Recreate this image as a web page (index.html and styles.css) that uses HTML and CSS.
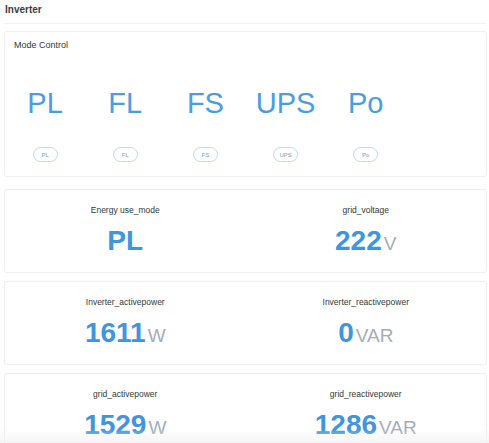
FILE: index.html
```html
<!DOCTYPE html>
<html>
<head>
<meta charset="utf-8">
<link rel="stylesheet" href="styles.css">
</head>
<body>
<div class="page">
  <div class="header">Inverter</div>

  <div class="card mode-card">
    <div class="mode-title">Mode Control</div>
    <div class="mode-grid">
      <div class="mode-big">PL</div>
      <div class="mode-big">FL</div>
      <div class="mode-big">FS</div>
      <div class="mode-big">UPS</div>
      <div class="mode-big">Po</div>
      <div class="mode-empty"></div>
    </div>
    <div class="mode-grid pills">
      <div class="cell"><span class="pill">PL</span></div>
      <div class="cell"><span class="pill">FL</span></div>
      <div class="cell"><span class="pill">FS</span></div>
      <div class="cell"><span class="pill">UPS</span></div>
      <div class="cell"><span class="pill">Po</span></div>
      <div class="cell"></div>
    </div>
  </div>

  <div class="card stat-card first">
    <div class="stat">
      <div class="label">Energy use_mode</div>
      <div class="value">PL</div>
    </div>
    <div class="stat">
      <div class="label">grid_voltage</div>
      <div class="value">222<span class="unit">V</span></div>
    </div>
  </div>

  <div class="card stat-card">
    <div class="stat">
      <div class="label">Inverter_activepower</div>
      <div class="value">1611<span class="unit">W</span></div>
    </div>
    <div class="stat">
      <div class="label">Inverter_reactivepower</div>
      <div class="value">0<span class="unit">VAR</span></div>
    </div>
  </div>

  <div class="card stat-card">
    <div class="stat">
      <div class="label">grid_activepower</div>
      <div class="value">1529<span class="unit">W</span></div>
    </div>
    <div class="stat">
      <div class="label">grid_reactivepower</div>
      <div class="value">1286<span class="unit">VAR</span></div>
    </div>
  </div>
</div>
<div class="fade"></div>
</body>
</html>
```

FILE: styles.css
```css
html, body {
  margin: 0;
  padding: 0;
  background: #ffffff;
  font-family: "Liberation Sans", Arial, sans-serif;
  color: #2d3833;
  overflow: hidden;
}

.page {
  padding: 0 2px 0 4px;
}

.header {
  font-size: 10px;
  font-weight: 600;
  color: #3a3f3c;
  height: 23px;
  line-height: 20px;
  padding-left: 1px;
  border-bottom: 1px solid #f2f2f2;
}

.card {
  border: 1px solid #f0f0f0;
  border-radius: 3px;
  background: #ffffff;
  box-shadow: 0 0 2px rgba(0, 0, 0, 0.03);
}

.mode-card {
  margin-top: 7px;
  padding: 7px 0 14px;
}

.mode-title {
  font-size: 9px;
  line-height: 12px;
  padding-left: 9px;
  color: #2d3b34;
}

.mode-grid {
  display: grid;
  grid-template-columns: repeat(6, 1fr);
}

.mode-big {
  text-align: center;
  font-size: 29px;
  line-height: 29px;
  color: #4a9de2;
  margin-top: 38px;
}

.pills {
  margin-top: 29px;
}

.cell {
  display: flex;
  justify-content: center;
}

.pill {
  display: inline-flex;
  align-items: center;
  justify-content: center;
  height: 13px;
  min-width: 21px;
  padding: 0 1px;
  border: 1px solid #b9daf5;
  border-radius: 8px;
  font-size: 6px;
  color: #6a9fd0;
  box-sizing: content-box;
}

.stat-card {
  display: grid;
  grid-template-columns: 1fr 1fr;
  margin-top: 8px;
  padding: 14px 0 14px;
}

.stat-card.first {
  margin-top: 12px;
}

.stat {
  text-align: center;
}

.label {
  font-size: 8.5px;
  line-height: 12px;
  color: #2f3a35;
}

.value {
  margin-top: 11px;
  font-size: 28px;
  line-height: 28px;
  font-weight: bold;
  color: #3f95de;
}

.unit {
  font-size: 19px;
  font-weight: normal;
  color: #a4adb9;
  margin-left: 2px;
}

.fade {
  position: fixed;
  left: 0;
  right: 0;
  bottom: 0;
  height: 14px;
  background: linear-gradient(to bottom, rgba(245, 245, 245, 0), rgba(240, 240, 240, 0.7));
  pointer-events: none;
}
```
